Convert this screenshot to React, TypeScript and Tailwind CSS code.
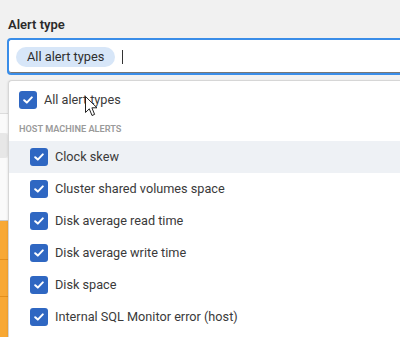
import React from 'react';

const hostAlerts = [
  'Clock skew',
  'Cluster shared volumes space',
  'Disk average read time',
  'Disk average write time',
  'Disk space',
  'Internal SQL Monitor error (host)',
];

function Checkbox() {
  return (
    <span className="flex h-[18px] w-[18px] shrink-0 items-center justify-center rounded-[3px] bg-[#2f67c2]">
      <svg width="10" height="8" viewBox="0 0 10 8" fill="none">
        <path d="M1.2 4.2 L3.8 6.6 L8.8 1.4" stroke="white" strokeWidth="2" strokeLinecap="round" strokeLinejoin="round" />
      </svg>
    </span>
  );
}

function Cursor() {
  return (
    <svg className="absolute left-[85px] top-[96px]" width="13" height="21" viewBox="0 0 13 21">
      <path d="M0.5 0.5 L0.5 16.5 L4.3 12.8 L7 19.5 L9.6 18.4 L6.9 11.8 L12 11.8 Z" fill="white" stroke="#222" strokeWidth="1" strokeLinejoin="round" />
    </svg>
  );
}

export default function App() {
  return (
    <div className="relative h-[337px] w-[400px] overflow-hidden bg-[#f1f1f1] font-['Roboto',sans-serif] text-[#333]">
      {/* Field label + multi-select input */}
      <div className="pl-2 pt-[17px] text-[13px] font-semibold leading-4 text-[#2b2b2b]">Alert type</div>
      <div className="ml-[7px] mt-[5px] flex h-[37px] items-center rounded-l-[4px] border-2 border-r-0 border-[#3a8de8] bg-white pl-[7px] shadow-[inset_0_-1px_0_#777]">
        <span className="h-5 rounded-full bg-[#d7e6f8] px-[11px] text-[12.8px] leading-5 text-[#2e2e2e]">All alert types</span>
        <span className="ml-[7px] h-[14px] w-px bg-[#333]" />
      </div>

      {/* Page content peeking out behind the menu */}
      <div className="mt-[38px] flex w-2 flex-col">
        <div className="h-[20px] border-t border-[#dcdcdc] bg-[#fafafa]" />
        <div className="h-[25px] rounded-r-[4px] bg-[#e7e7e7]" />
        <div className="h-[63px] border-b border-[#c9c9c9] bg-[#fafafa]" />
        <div className="h-[39px] border-b border-[#e48f1c] bg-[#f8a834]" />
        <div className="h-[37px] border-b border-[#e48f1c] bg-[#f8a834]" />
        <div className="h-[60px] bg-[#f8a834]" />
      </div>

      {/* Dropdown menu */}
      <div className="absolute bottom-0 left-2 right-0 top-[80px] rounded-tl-[4px] border-l border-t border-[#d6d6d6] bg-white pt-[3px] shadow-[-1px_0_2px_rgba(0,0,0,0.06)]">
        <div className="flex h-8 items-center gap-[7px] pl-[10px] text-[12.7px] text-[#3a3a3a]">
          <Checkbox />
          <span>All alert types</span>
        </div>
        <div className="flex h-[25px] items-center pl-[10px] text-[9.2px] font-semibold text-[#9a9a9a]">
          HOST MACHINE ALERTS
        </div>
        {hostAlerts.map((name, i) => (
          <div
            key={name}
            className={`flex h-8 items-center gap-[7px] pl-[21px] text-[12.7px] text-[#3a3a3a] ${i === 0 ? 'bg-[#eef1f5]' : ''}`}
          >
            <Checkbox />
            <span>{name}</span>
          </div>
        ))}
      </div>

      <Cursor />
    </div>
  );
}
